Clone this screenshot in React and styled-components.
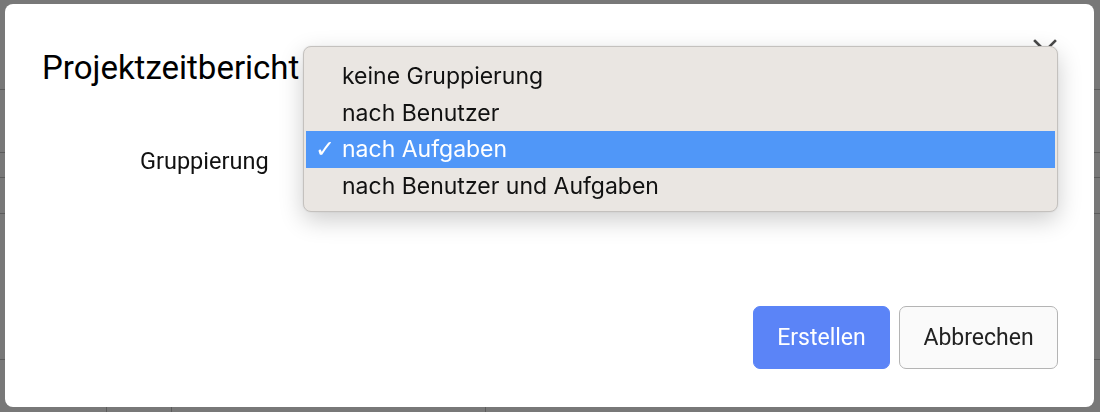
import React from 'react';
import styled, { createGlobalStyle } from 'styled-components';

const options = [
  'keine Gruppierung',
  'nach Benutzer',
  'nach Aufgaben',
  'nach Benutzer und Aufgaben',
];

const GlobalStyle = createGlobalStyle`
  html, body {
    margin: 0;
    height: 100%;
    background: #787878;
    font-family: Roboto, "Liberation Sans", sans-serif;
    overflow: hidden;
  }
`;

function Backdrop() {
  const rows = [90, 63, 25, 36, 146];
  return (
    <Table>
      {rows.map((h, i) => (
        <TableRow key={i} $height={h} />
      ))}
      <TableRow $height={60}>
        <Cell $width={106} />
        <Cell $width={64} />
        <Cell $width={313} />
      </TableRow>
    </Table>
  );
}

function CloseIcon() {
  return (
    <svg width="24" height="24" viewBox="0 0 24 24" fill="none">
      <path d="M2 2 L22 22 M22 2 L2 22" stroke="#4a4a4a" strokeWidth="2.6" strokeLinecap="square" />
    </svg>
  );
}

function App() {
  return (
    <>
      <GlobalStyle />
      <Backdrop />
      <Modal>
        <Header>
          <Title>Projektzeitbericht</Title>
          <CloseButton aria-label="Schließen">
            <CloseIcon />
          </CloseButton>
        </Header>
        <Body>
          <Label>Gruppierung</Label>
          <SelectWrap>
            <SelectBox />
            <Menu>
              {options.map((opt) => (
                <MenuItem key={opt} $active={opt === 'nach Aufgaben'}>
                  <Check>{opt === 'nach Aufgaben' ? '✓' : ''}</Check>
                  {opt}
                </MenuItem>
              ))}
            </Menu>
          </SelectWrap>
        </Body>
        <Footer>
          <Button $primary>Erstellen</Button>
          <Button>Abbrechen</Button>
        </Footer>
      </Modal>
    </>
  );
}

export default App;

const Table = styled.div`
  display: flex;
  flex-direction: column;
`;

const TableRow = styled.div`
  display: flex;
  height: ${(p) => p.$height}px;
  border-bottom: 1px solid #5c5c5c;
  box-sizing: border-box;
`;

const Cell = styled.div`
  width: ${(p) => p.$width}px;
  border-right: 1px solid #5c5c5c;
`;

const Modal = styled.div`
  position: fixed;
  left: 5px;
  top: 4px;
  width: 1089px;
  height: 403px;
  box-sizing: border-box;
  background: #fff;
  border-radius: 8px;
  display: flex;
  flex-direction: column;
  padding: 0 36px 38px 37px;
`;

const Header = styled.div`
  display: flex;
  justify-content: space-between;
  align-items: flex-start;
  padding-top: 46px;
`;

const Title = styled.h2`
  margin: 0;
  font-weight: 400;
  font-size: 33px;
  line-height: 36px;
  color: #000;
`;

const CloseButton = styled.button`
  border: 0;
  background: none;
  padding: 0;
  margin: -11px 1px 0 0;
  width: 24px;
  height: 24px;
  cursor: pointer;
`;

const Body = styled.div`
  display: flex;
  align-items: center;
  padding: 0 0 0 98px;
  margin-top: 45px;
`;

const Label = styled.label`
  width: 163px;
  font-size: 23.5px;
  color: #111;
`;

const SelectWrap = styled.div`
  position: relative;
  flex: 1;
`;

const SelectBox = styled.div`
  height: 60px;
  border: 1px solid #b8b8b8;
  border-radius: 7px;
  background: #fafafa;
  box-sizing: border-box;
`;

const Menu = styled.div`
  position: absolute;
  left: 0;
  right: 0;
  top: -85px;
  height: 166px;
  box-sizing: border-box;
  padding: 11px 2px 0;
  background: #eae6e2;
  border: 1px solid #c4c1be;
  border-radius: 8px;
  box-shadow: 0 8px 24px rgba(0, 0, 0, 0.2), 0 0 2px rgba(0, 0, 0, 0.1);
  font-family: Inter, "Noto Sans", sans-serif;
`;

const MenuItem = styled.div`
  display: flex;
  align-items: center;
  height: 36.5px;
  font-size: 23px;
  color: ${(p) => (p.$active ? '#fff' : '#111')};
  background: ${(p) => (p.$active ? '#5097f8' : 'transparent')};
`;

const Check = styled.span`
  width: 36px;
  padding-left: 9px;
  box-sizing: border-box;
  font-family: "DejaVu Sans", sans-serif;
  font-size: 24px;
`;

const Footer = styled.div`
  margin-top: auto;
  display: flex;
  justify-content: flex-end;
  gap: 9px;
`;

const Button = styled.button`
  height: 63px;
  padding: 0 22px;
  min-width: ${(p) => (p.$primary ? 137 : 159)}px;
  border-radius: 7px;
  font-family: Roboto, "Liberation Sans", sans-serif;
  font-size: 23px;
  cursor: pointer;
  border: 1px solid ${(p) => (p.$primary ? '#5b84f7' : '#b4b4b4')};
  background: ${(p) => (p.$primary ? '#5b84f7' : '#fafafa')};
  color: ${(p) => (p.$primary ? '#fff' : '#222')};
`;
